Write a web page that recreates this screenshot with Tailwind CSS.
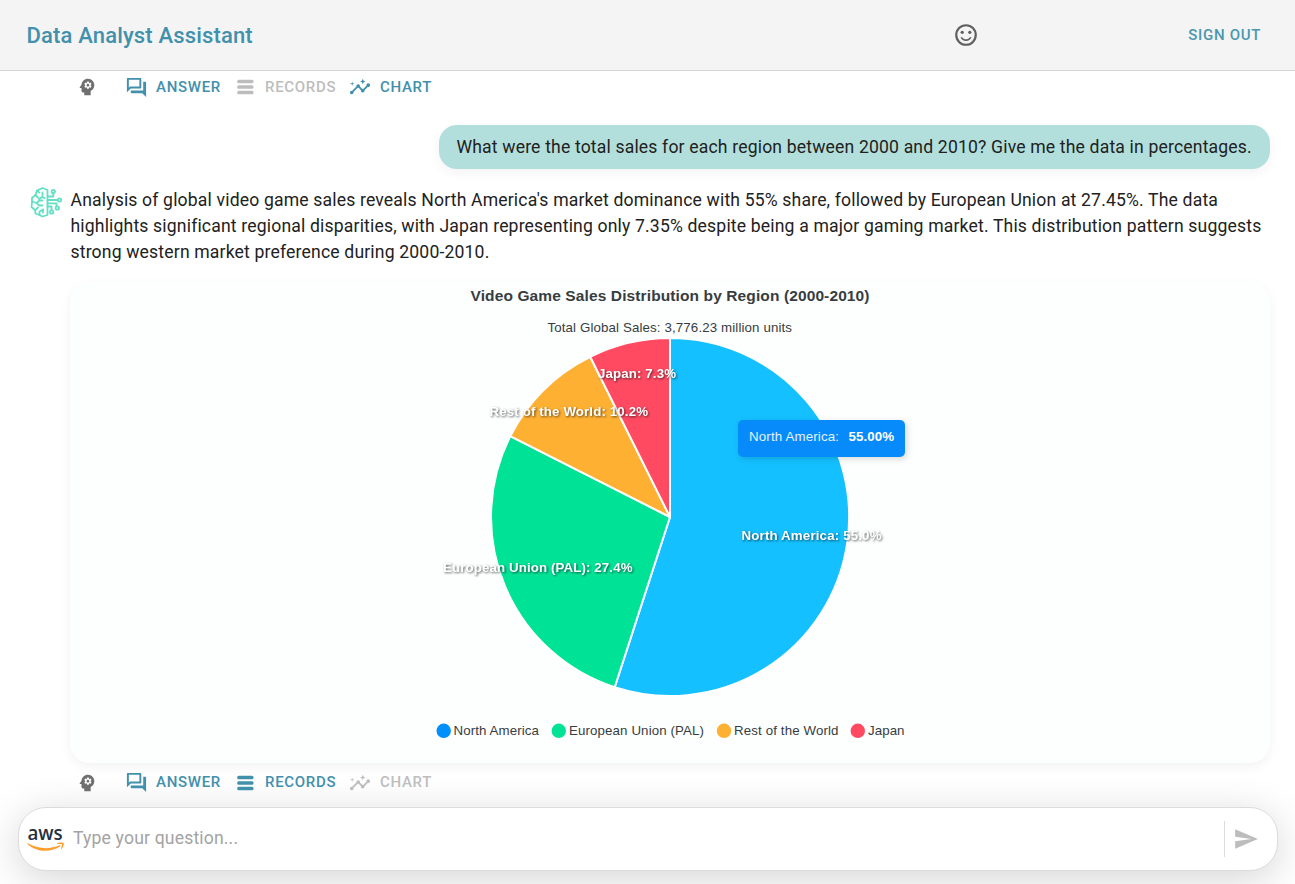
<!DOCTYPE html>
<html lang="en">
<head>
<meta charset="utf-8">
<title>Data Analyst Assistant</title>
<script src="https://cdn.jsdelivr.net/npm/@tailwindcss/browser@4"></script>
</head>
<body class="h-[884px] overflow-hidden bg-white font-[Roboto,sans-serif] text-[#212121]">
<svg class="hidden">
  <symbol id="psychology" viewBox="0 0 24 24"><path d="M13 8.57c-.79 0-1.43.64-1.43 1.43s.64 1.43 1.43 1.43 1.43-.64 1.43-1.43-.64-1.43-1.43-1.43z"/><path d="M13 3C9.25 3 6.2 5.94 6.02 9.64L4.1 12.2c-.25.33-.01.8.4.8H6v3c0 1.1.9 2 2 2h1v3h7v-4.68c2.36-1.12 4-3.53 4-6.32 0-3.87-3.13-7-7-7zm3 7c0 .13-.01.26-.02.39l.83.66c.08.06.1.16.05.25l-.8 1.39c-.05.09-.16.12-.24.09l-.99-.4c-.21.16-.43.29-.67.39L14 13.83c-.01.1-.1.17-.2.17h-1.6c-.1 0-.18-.07-.2-.17l-.15-1.06c-.25-.1-.47-.23-.68-.39l-.99.4c-.09.03-.2 0-.25-.09l-.8-1.39c-.05-.08-.03-.19.05-.25l.84-.66c-.01-.13-.02-.26-.02-.39s.02-.27.04-.39l-.85-.66c-.08-.06-.1-.16-.05-.26l.8-1.38c.05-.09.15-.12.24-.09l1 .4c.2-.15.43-.29.67-.39L12 6.17c.02-.1.1-.17.2-.17h1.6c.1 0 .18.07.2.17l.15 1.06c.24.1.46.23.67.39l1-.4c.09-.03.2 0 .24.09l.8 1.38c.05.09.03.2-.05.26l-.85.66c.03.12.04.25.04.39z"/></symbol>
  <symbol id="answer" viewBox="0 0 24 24"><path d="M15 4v7H5.17L4 12.17V4h11m1-2H3c-.55 0-1 .45-1 1v14l4-4h10c.55 0 1-.45 1-1V3c0-.55-.45-1-1-1zm5 4h-2v9H6v2c0 .55.45 1 1 1h11l4 4V7c0-.55-.45-1-1-1z"/></symbol>
  <symbol id="records" viewBox="0 0 17 16"><rect x="0.2" y="0.7" width="16.3" height="3.5" rx="1.5"/><rect x="0.2" y="6.2" width="16.3" height="3.5" rx="1.5"/><rect x="0.2" y="11.7" width="16.3" height="3.5" rx="1.5"/></symbol>
  <symbol id="insights" viewBox="0 0 24 24"><path d="M21 8c-1.45 0-2.26 1.44-1.93 2.51l-3.55 3.56c-.3-.09-.74-.09-1.04 0l-2.55-2.55C12.27 10.45 11.46 9 10 9c-1.45 0-2.27 1.44-1.93 2.52l-4.56 4.55C2.44 15.74 1 16.55 1 18c0 1.1.9 2 2 2 1.45 0 2.26-1.44 1.93-2.51l4.55-4.56c.3.09.74.09 1.04 0l2.55 2.55C12.73 16.55 13.54 18 15 18c1.45 0 2.27-1.44 1.93-2.52l3.56-3.55c1.07.33 2.51-.48 2.51-1.93 0-1.1-.9-2-2-2z"/><path d="m15 9 .94-2.07L18 6l-2.06-.93L15 3l-.92 2.07L12 6l2.08.93zM3.5 11 4 9l2-.5L4 8l-.5-2L3 8l-2 .5L3 9z"/></symbol>
</svg>

<header class="flex h-[71px] items-center border-b border-[#d5d5d5] bg-[#f4f4f4] pl-[26.5px] pr-[34px]">
  <h1 class="text-[22px] font-medium tracking-[0.16px] text-[#4190ac]">Data Analyst Assistant</h1>
  <svg class="ml-auto mr-[209px] size-[26px] fill-[#5f5f5f]" viewBox="0 0 24 24"><circle cx="15.5" cy="9.5" r="1.5"/><circle cx="8.5" cy="9.5" r="1.5"/><path fill-rule="evenodd" d="M12 2a10 10 0 1 0 0 20 10 10 0 0 0 0-20zm0 18a8 8 0 1 1 0-16 8 8 0 0 1 0 16z"/><path d="M12 16c-1.48 0-2.75-.81-3.45-2H6.88c.8 2.05 2.79 3.5 5.12 3.5s4.32-1.45 5.12-3.5h-1.67c-.7 1.19-1.97 2-3.45 2z"/></svg>
  <button class="text-[15px] font-medium tracking-[0.68px] text-[#4b97b1]">SIGN OUT</button>
</header>

<main class="h-[736px] pl-[30px] pr-[25px]">
  <div class="flex h-8 items-center pl-[46px] text-[15px] font-medium tracking-[0.7px] text-[#4190ac]">
    <svg class="size-[22px] fill-[#6f6f6f]"><use href="#psychology"/></svg>
    <svg class="ml-[27px] size-[23px] fill-current"><use href="#answer"/></svg>
    <span class="ml-2 w-[81px]">ANSWER</span>
    <svg class="h-4 w-[17px] fill-[#bdbdbd]"><use href="#records"/></svg>
    <span class="ml-[11px] w-[84px] text-[#bdbdbd]">RECORDS</span>
    <svg class="size-[22px] fill-current"><use href="#insights"/></svg>
    <span class="ml-[9px]">CHART</span>
  </div>

  <div class="mt-[22px] flex justify-end">
    <p class="flex h-11 w-[831px] items-center whitespace-nowrap rounded-[18px] bg-[#b2dfdb] pl-[17.5px] text-[17.6px] tracking-[0.16px] shadow-[0_4px_12px_rgba(0,0,0,0.05)]">What were the total sales for each region between 2000 and 2010? Give me the data in percentages.</p>
  </div>

  <div class="mt-[18px] flex">
    <svg class="h-8 w-8 shrink-0" viewBox="0 0 32 32" fill="none" stroke="#64dfc6" stroke-width="1.8" stroke-linejoin="round" stroke-linecap="round">
      <path d="M17.500 3 12.500 1 7 3.600 5.500 8 2 11v4.500L1.500 20l3.500 3 .5 3.500 4 1.500 3 1.500 5-1.500z"/>
      <path d="M5.500 8 8 10.500M12.500 5.500v4.200L9 12M2.500 14.500l4 1.500 3-2.500h3M6.500 16l2.800 2.500h3.200M5.500 23l2.500-2.500M9.500 28v-3.500l3.500-2M13 22.500v3M12.500 9.700l2 1.500M7 3.600l2.500 2"/>
      <path d="M17.500 9.500h5.800V6.500M17.500 13h10.300M17.500 16.300h9v3M17.500 19.500h4v3.500"/>
      <circle cx="23.300" cy="4.500" r="1.700"/><circle cx="29.500" cy="13" r="1.600"/><circle cx="27.300" cy="21" r="1.700"/><circle cx="21.600" cy="25" r="1.700"/>
    </svg>
    <div class="ml-[8.5px] whitespace-nowrap text-[17.6px] leading-[26px] tracking-[0.16px]">
      <p>Analysis of global video game sales reveals North America's market dominance with 55% share, followed by European Union at 27.45%. The data</p>
      <p>highlights significant regional disparities, with Japan representing only 7.35% despite being a major gaming market. This distribution pattern suggests</p>
      <p>strong western market preference during 2000-2010.</p>
    </div>
  </div>

  <section class="ml-10 mt-[17px] h-[481px] w-[1200px] rounded-[20px] bg-[#fdfefe] shadow-[0_4px_12px_rgba(0,0,0,0.05)]">
    <svg class="h-[481px] w-[1200px] font-['Liberation_Sans',sans-serif]" viewBox="70 282 1200 481">
      <g fill="#373d3f">
        <text x="470.500" y="301" font-size="15.500" font-weight="700" textLength="399">Video Game Sales Distribution by Region (2000-2010)</text>
        <text x="547.500" y="332" font-size="13.300" textLength="244.500">Total Global Sales: 3,776.23 million units</text>
      </g>
      <g stroke="#fff" stroke-width="2" stroke-linejoin="round">
        <path fill="#14c0ff" d="M670 517V338A179 179 0 1 1 614.700 687.200z"/>
        <path fill="#00e396" d="M670 517 614.700 687.200A179 179 0 0 1 510.300 436.200z"/>
        <path fill="#feb032" d="M670 517 510.300 436.200A179 179 0 0 1 590.200 356.800z"/>
        <path fill="#ff4a62" d="M670 517 590.200 356.800A179 179 0 0 1 670 338z"/>
      </g>
      <g class="drop-shadow-[1px_1px_1px_rgba(0,0,0,0.6)]" fill="#fff" font-size="13.300" font-weight="700">
        <text x="598" y="378" textLength="78">Japan: 7.3%</text>
        <text x="489.500" y="416" textLength="158.500">Rest of the World: 10.2%</text>
        <text x="741.500" y="540" textLength="140">North America: 55.0%</text>
        <text x="443" y="572" textLength="189.500">European Union (PAL): 27.4%</text>
      </g>
      <g fill="#373d3f" font-size="13.300">
        <circle cx="443.700" cy="730.800" r="7.200" fill="#008ffb"/><text x="453.500" y="735" textLength="85.500">North America</text>
        <circle cx="558.800" cy="730.800" r="7.200" fill="#00e396"/><text x="569" y="735" textLength="135">European Union (PAL)</text>
        <circle cx="724" cy="730.800" r="7.200" fill="#feb032"/><text x="734" y="735" textLength="104.500">Rest of the World</text>
        <circle cx="857.800" cy="730.800" r="7.200" fill="#ff4a62"/><text x="868" y="735" textLength="36.500">Japan</text>
      </g>
      <g fill="#fff" font-size="13.300">
        <rect class="drop-shadow-[2px_2px_3px_rgba(0,0,0,0.15)]" x="738" y="420" width="167" height="37" rx="5" fill="#078bfa"/>
        <text x="749" y="441" textLength="90" fill="#e3f2ff">North America:</text>
        <text x="848.500" y="441" font-weight="700" textLength="45.500">55.00%</text>
      </g>
    </svg>
  </section>

  <div class="mt-[3px] flex h-8 items-center pl-[46px] text-[15px] font-medium tracking-[0.7px] text-[#4190ac]">
    <svg class="mt-px size-[22px] fill-[#6f6f6f]"><use href="#psychology"/></svg>
    <svg class="ml-[27px] size-[23px] fill-current"><use href="#answer"/></svg>
    <span class="ml-2 w-[81px]">ANSWER</span>
    <svg class="mt-px h-4 w-[17px] fill-current"><use href="#records"/></svg>
    <span class="ml-[11px] w-[84px]">RECORDS</span>
    <svg class="mt-px size-[22px] fill-[#bdbdbd]"><use href="#insights"/></svg>
    <span class="ml-[9px] text-[#bdbdbd]">CHART</span>
  </div>
</main>

<footer class="pl-[18px] pr-[17px]">
  <form class="flex h-16 items-center rounded-[28px] border border-[#dcdcdc] bg-white pl-2 pr-[18px] shadow-[0_8px_40px_rgba(0,0,0,0.17)]">
    <svg class="h-[23px] w-[37px] overflow-visible" viewBox="0 0 37 23">
      <text x="0.400" y="12.300" class="font-['Open_Sans',sans-serif]" font-size="20.500" font-weight="600" fill="#252f3e" textLength="35.300" lengthAdjust="spacingAndGlyphs">aws</text>
      <g fill="#ff9d2b" transform="translate(0 .8) scale(.1215)"><path d="M273.500 143.700c-32.900 24.300-80.700 37.200-121.800 37.200-57.600 0-109.500-21.300-148.700-56.700-3.100-2.800-.3-6.600 3.400-4.400 42.400 24.600 94.700 39.500 148.800 39.500 36.500 0 76.600-7.600 113.500-23.200 5.500-2.500 10.200 3.600 4.800 7.600z"/><path d="M287.200 128.100c-4.200-5.400-27.800-2.600-38.500-1.300-3.200.4-3.700-2.400-.8-4.500 18.800-13.200 49.700-9.400 53.300-5 3.600 4.500-1 35.400-18.600 50.200-2.700 2.300-5.300 1.100-4.100-1.900 4-9.900 12.900-32.200 8.700-37.500z"/></g>
    </svg>
    <span class="-mt-px ml-[9px] text-[17.6px] tracking-[0.16px] text-[#a3a3a3]">Type your question...</span>
    <div class="ml-auto h-9 w-px bg-[#dcdcdc]"></div>
    <svg class="ml-2 size-[26px] fill-[#bdbdbd]" viewBox="0 0 24 24"><path d="M2.010 21 23 12 2.010 3 2 10l15 2-15 2z"/></svg>
  </form>
</footer>
</body>
</html>
